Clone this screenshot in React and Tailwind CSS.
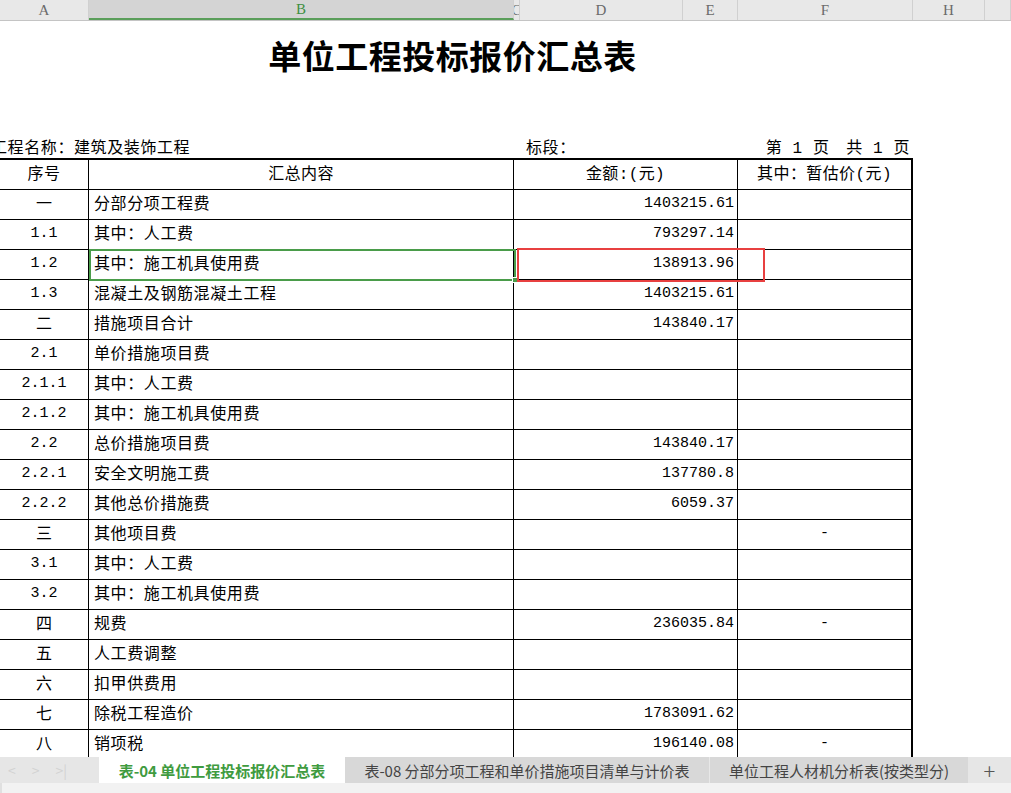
import React from "react";

const rows = [
  ["一", "分部分项工程费", "1403215.61", ""],
  ["1.1", "其中：人工费", "793297.14", ""],
  ["1.2", "其中：施工机具使用费", "138913.96", ""],
  ["1.3", "混凝土及钢筋混凝土工程", "1403215.61", ""],
  ["二", "措施项目合计", "143840.17", ""],
  ["2.1", "单价措施项目费", "", ""],
  ["2.1.1", "其中：人工费", "", ""],
  ["2.1.2", "其中：施工机具使用费", "", ""],
  ["2.2", "总价措施项目费", "143840.17", ""],
  ["2.2.1", "安全文明施工费", "137780.8", ""],
  ["2.2.2", "其他总价措施费", "6059.37", ""],
  ["三", "其他项目费", "", "-"],
  ["3.1", "其中：人工费", "", ""],
  ["3.2", "其中：施工机具使用费", "", ""],
  ["四", "规费", "236035.84", "-"],
  ["五", "人工费调整", "", ""],
  ["六", "扣甲供费用", "", ""],
  ["七", "除税工程造价", "1783091.62", ""],
  ["八", "销项税", "196140.08", "-"],
];

const cols = [
  { l: "A", w: "w-[89px]" },
  { l: "B", w: "w-[425px]", sel: true },
  { l: "C", w: "w-[6px]" },
  { l: "D", w: "w-[163px]" },
  { l: "E", w: "w-[55px]" },
  { l: "F", w: "w-[175px]" },
  { l: "H", w: "w-[72px]" },
  { l: "", w: "flex-1" },
];

const isCJK = (s) => /[\u4e00-\u9fff]/.test(s);

export default function App() {
  return (
    <div className="w-[1011px] h-[793px] overflow-hidden bg-white flex flex-col font-['Liberation_Mono','Noto_Sans_CJK_SC',monospace] text-black">
      {/* column letters */}
      <div className="h-[21px] flex shrink-0 border-b border-[#c4c4c4] bg-[#e8e8e8] font-['Liberation_Serif','Noto_Sans_CJK_SC',serif] text-[15px] text-[#6b6b6b]">
        {cols.map((c, i) => (
          <div
            key={i}
            className={
              c.w +
              " h-[20px] flex items-center justify-center overflow-hidden border-r border-[#d0d0d0] leading-none " +
              (c.sel ? "bg-[#d4d4d4] text-[#3f8f3f] border-b-2 border-b-[#5a9e5a]" : "")
            }
          >
            {c.l}
          </div>
        ))}
      </div>

      {/* sheet */}
      <div className="flex-1 overflow-hidden flex flex-col">
        <div className="h-[68px] w-[905px] shrink-0 flex items-center justify-center font-['Noto_Sans_CJK_SC',sans-serif] font-bold text-[33px] tracking-[0.5px] leading-none">
          单位工程投标报价汇总表
        </div>
        <div className="h-[51px] shrink-0" />
        <div className="h-[18px] w-[912px] shrink-0 flex items-end text-[16px] leading-[18px] tracking-[0.6px]">
          <div className="ml-[-9px] w-[535px]">工程名称：建筑及装饰工程</div>
          <div className="flex-1">标段：</div>
          <div className="pr-[2px]">第 1 页　共 1 页</div>
        </div>

        {/* table */}
        <div className="w-[913px] shrink-0 border-t-2 border-black grid grid-cols-[89px_425px_224px_175px]">
          {["序号", "汇总内容", "金额:(元)", "其中：暂估价(元)"].map((h, i) => (
            <div
              key={i}
              className={
                "h-[30px] flex items-center justify-center border-b border-black text-[16px] tracking-[0.4px] " +
                (i === 3 ? "border-r-2" : "border-r")
              }
            >
              {h}
            </div>
          ))}
          {rows.map((r, ri) => (
            <React.Fragment key={ri}>
              <div
                className={
                  "h-[30px] flex items-center justify-center border-r border-b border-black " +
                  (isCJK(r[0]) ? "text-[16px]" : "text-[15px]")
                }
              >
                {r[0]}
              </div>
              <div className="h-[30px] relative flex items-center pl-[5px] border-r border-b border-black text-[16px] tracking-[0.6px]">
                {r[1]}
                {ri === 2 && (
                  <div className="absolute left-0 top-[-1px] w-[427px] h-[32px] border-[2px] border-[#4a9c4a] z-10">
                    <div className="absolute right-[-4px] bottom-[-4px] w-[6px] h-[6px] bg-[#4a9c4a] border border-white" />
                  </div>
                )}
              </div>
              <div className="h-[30px] relative flex items-center justify-end pr-[3px] border-r border-b border-black text-[15px]">
                {r[2]}
                {ri === 2 && (
                  <div className="absolute left-[3px] top-[-2px] w-[248px] h-[34px] border-[2px] border-[#e84040] z-20" />
                )}
              </div>
              <div className="h-[30px] flex items-center justify-center border-r-2 border-b border-black text-[15px]">
                {r[3]}
              </div>
            </React.Fragment>
          ))}
        </div>
      </div>

      {/* tab bar */}
      <div className="h-[26px] shrink-0 flex bg-[#e6e6e6] font-['Noto_Sans_CJK_SC',sans-serif] text-[15px] leading-none">
        <div className="w-[99px] flex items-center gap-[16px] pl-[8px] text-[#d2d2d2] text-[14px]">
          <span>&lt;</span>
          <span>&gt;</span>
          <span>&gt;|</span>
        </div>
        <div className="w-[246px] bg-white flex items-center justify-center font-bold text-[#3f9b3f]">
          表-04 单位工程投标报价汇总表
        </div>
        <div className="w-[365px] bg-[#d8d8d8] flex items-center justify-center text-[#444] border-r border-[#e8e8e8]">
          表-08 分部分项工程和单价措施项目清单与计价表
        </div>
        <div className="w-[258px] bg-[#d8d8d8] flex items-center justify-center text-[#444]">
          单位工程人材机分析表(按类型分)
        </div>
        <div className="flex-1 flex items-center justify-center text-[#555] text-[22px] font-light">+</div>
      </div>
      <div className="h-[10px] shrink-0 bg-[#f2f2f2] border-l-2 border-[#e0e0e0]" />
    </div>
  );
}
